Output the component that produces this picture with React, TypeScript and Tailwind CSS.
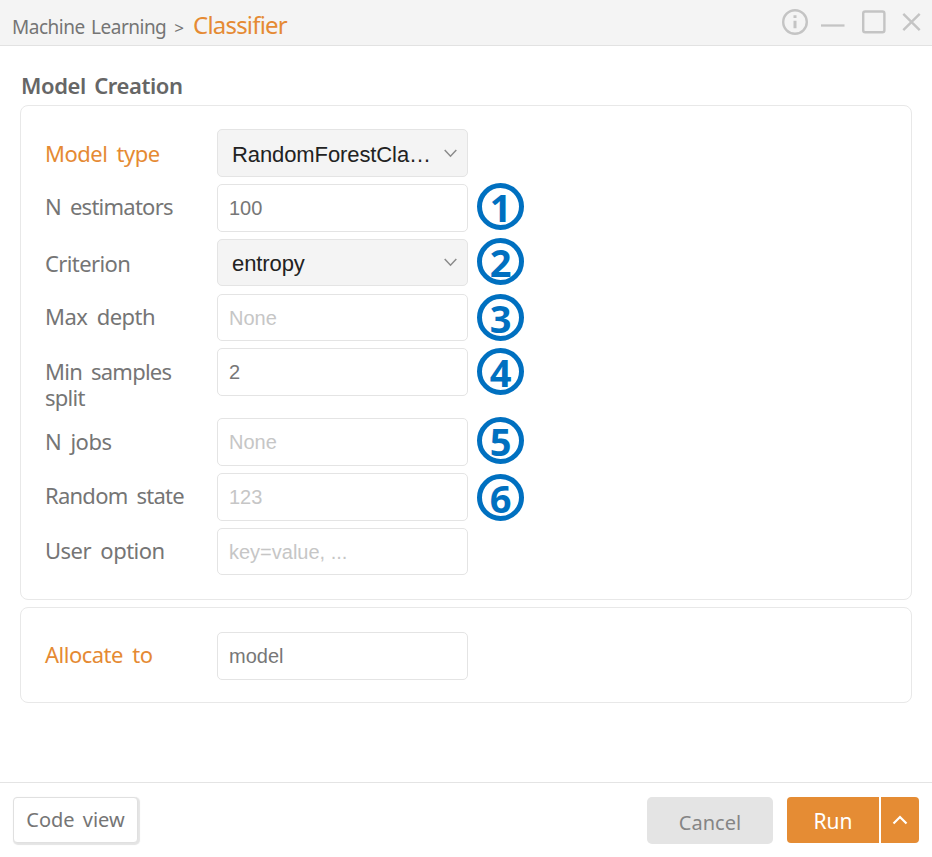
import React from "react";

type Row = {
  label: string;
  labelClass: string;
  value: string;
  kind: "select" | "input" | "placeholder";
  rowClass: string;
  boxClass: string;
  badge?: string;
  badgeClass?: string;
};

const rows: Row[] = [
  { label: "Model type", labelClass: "pt-[11px] text-[#e58a33] tracking-[-0.5px] [word-spacing:4px]", value: "RandomForestCla…", kind: "select", rowClass: "h-[55px]", boxClass: "h-12" },
  { label: "N estimators", labelClass: "pt-[9px] tracking-[-0.75px] [word-spacing:4px]", value: "100", kind: "input", rowClass: "h-[55px]", boxClass: "h-12", badge: "1", badgeClass: "-mt-px" },
  { label: "Criterion", labelClass: "pt-[11px] tracking-[-0.6px]", value: "entropy", kind: "select", rowClass: "h-[55px]", boxClass: "h-[47px]", badge: "2", badgeClass: "-mt-px" },
  { label: "Max depth", labelClass: "pt-[9px] tracking-[-0.5px] [word-spacing:4px]", value: "None", kind: "placeholder", rowClass: "h-[54px]", boxClass: "h-[47px]", badge: "3", badgeClass: "" },
  { label: "Min samples split", labelClass: "pt-[10px] tracking-[-0.75px] [word-spacing:4px]", value: "2", kind: "input", rowClass: "h-[70px]", boxClass: "h-12", badge: "4", badgeClass: "" },
  { label: "N jobs", labelClass: "pt-[10px] tracking-[-0.5px] [word-spacing:4px]", value: "None", kind: "placeholder", rowClass: "h-[55px]", boxClass: "h-12", badge: "5", badgeClass: "-mt-px" },
  { label: "Random state", labelClass: "pt-[9px] tracking-[-0.75px] [word-spacing:4px]", value: "123", kind: "placeholder", rowClass: "h-[55px]", boxClass: "h-12", badge: "6", badgeClass: "mt-px" },
  { label: "User option", labelClass: "pt-[9px] tracking-[-0.5px] [word-spacing:4px]", value: "key=value, ...", kind: "placeholder", rowClass: "h-[47px]", boxClass: "h-[47px]" },
];

function Field({ kind, value, className }: { kind: Row["kind"]; value: string; className: string }) {
  const base = "flex w-[251px] shrink-0 items-center rounded-[5px] border-[1.5px] border-[#e4e4e4] font-['Liberation_Sans',Arial,sans-serif] ";
  if (kind === "select") {
    return (
      <div className={base + "justify-between bg-[#f4f4f4] pl-[14px] pr-[10px] text-[22px] tracking-[-0.1px] text-[#222] " + className}>
        <span className="pt-[2px]">{value}</span>
        <svg className="h-[9px] w-[13px]" viewBox="0 0 13 9" fill="none" stroke="#8b8b8b" strokeWidth="1.5">
          <path d="M.7 1 6.5 7.2 12.3 1" />
        </svg>
      </div>
    );
  }
  return (
    <div className={base + "bg-white pl-[11px] text-[20px] " + (kind === "input" ? "text-[#777] " : "text-[#c6c6c6] ") + className}>
      {value}
    </div>
  );
}

function Badge({ text, className }: { text: string; className: string }) {
  return (
    <div className={"ml-[9px] flex size-[47px] shrink-0 items-center justify-center rounded-full border-[5px] border-[#0070c0] font-['Noto_Sans',sans-serif] text-[38px] leading-none font-bold text-[#0070c0] " + className}>
      <span>{text}</span>
    </div>
  );
}

export default function App() {
  return (
    <div className="flex h-[857px] w-[932px] flex-col overflow-hidden bg-white font-['Noto_Sans','Noto_Sans_CJK_KR',sans-serif] text-[#757575]">
      <header className="flex h-[46px] shrink-0 justify-between border-b-[1.5px] border-[#e2e2e2] bg-[#f4f4f4]">
        <div className="flex items-baseline pl-3">
          <span className="text-[19px] leading-[54px] tracking-[-0.5px] [word-spacing:2px]">Machine Learning</span>
          <span className="ml-[8px] text-[17px]">&gt;</span>
          <span className="ml-[9px] text-[24px] leading-[50px] tracking-[-0.8px] text-[#e58a33]">Classifier</span>
        </div>
        <svg className="h-[45px] w-[152px]" viewBox="780 0 152 45" fill="none" stroke="#c4c4c4" strokeWidth="2.4">
          <circle cx="795" cy="22" r="11.8" />
          <path d="M795 20.8v7.5M795 15.2v2.8" strokeWidth="3" />
          <path d="M821 25.5h23.5" strokeWidth="2.3" />
          <rect x="863.2" y="11.5" width="21.2" height="20.8" rx="2" />
          <path d="m903.3 13.8 16.4 16.4m0-16.4-16.4 16.4" />
        </svg>
      </header>

      <main className="flex flex-1 flex-col px-5">
        <h1 className="mt-[23px] h-[36px] pl-px text-[22px] leading-[32px] font-semibold tracking-[-0.4px] text-[#666] [word-spacing:3px]">Model Creation</h1>
        <section className="h-[495px] rounded-[8px] border-[1.5px] border-[#e8e8e8] pt-[23px] pl-[24px]">
          {rows.map((r) => (
            <div key={r.label} className={"flex items-start " + r.rowClass}>
              <div className={"w-[172px] shrink-0 pr-5 text-[22px] leading-[26px] " + r.labelClass}>{r.label}</div>
              <Field kind={r.kind} value={r.value} className={r.boxClass} />
              {r.badge && <Badge text={r.badge} className={r.badgeClass ?? ""} />}
            </div>
          ))}
        </section>
        <section className="mt-[7px] flex h-[96px] items-start rounded-[8px] border-[1.5px] border-[#e8e8e8] pt-[24px] pl-[24px]">
          <div className="w-[172px] shrink-0 pt-[9px] text-[22px] leading-[26px] tracking-[-0.5px] text-[#e58a33] [word-spacing:4px]">Allocate to</div>
          <Field kind="input" value="model" className="h-12" />
        </section>
      </main>

      <footer className="flex h-[75px] shrink-0 items-start border-t-[1.5px] border-[#e4e4e4] px-[13px] pt-[14px]">
        <button className="h-[46px] w-[125px] rounded-[4px] border border-[#e0e0e0] bg-white text-[20px] shadow-[1px_1px_1px_1px_#e4e4e4] [word-spacing:3px]">Code view</button>
        <button className="ml-auto h-[47px] w-[126px] rounded-[5px] bg-[#e4e4e4] pt-[4px] text-[20px] text-[#858585]">Cancel</button>
        <button className="ml-[14px] h-[46px] w-[92px] rounded-l-[4px] bg-[#e58c34] pt-[3px] text-[21px] text-white">Run</button>
        <button className="ml-[2px] flex h-[46px] w-[38px] items-center justify-center rounded-r-[4px] bg-[#e58c34]">
          <svg className="h-[10px] w-4" viewBox="0 0 16 10" fill="none" stroke="white" strokeWidth="2.2">
            <path d="M1.5 8.5 8 2l6.5 6.5" />
          </svg>
        </button>
      </footer>
    </div>
  );
}
